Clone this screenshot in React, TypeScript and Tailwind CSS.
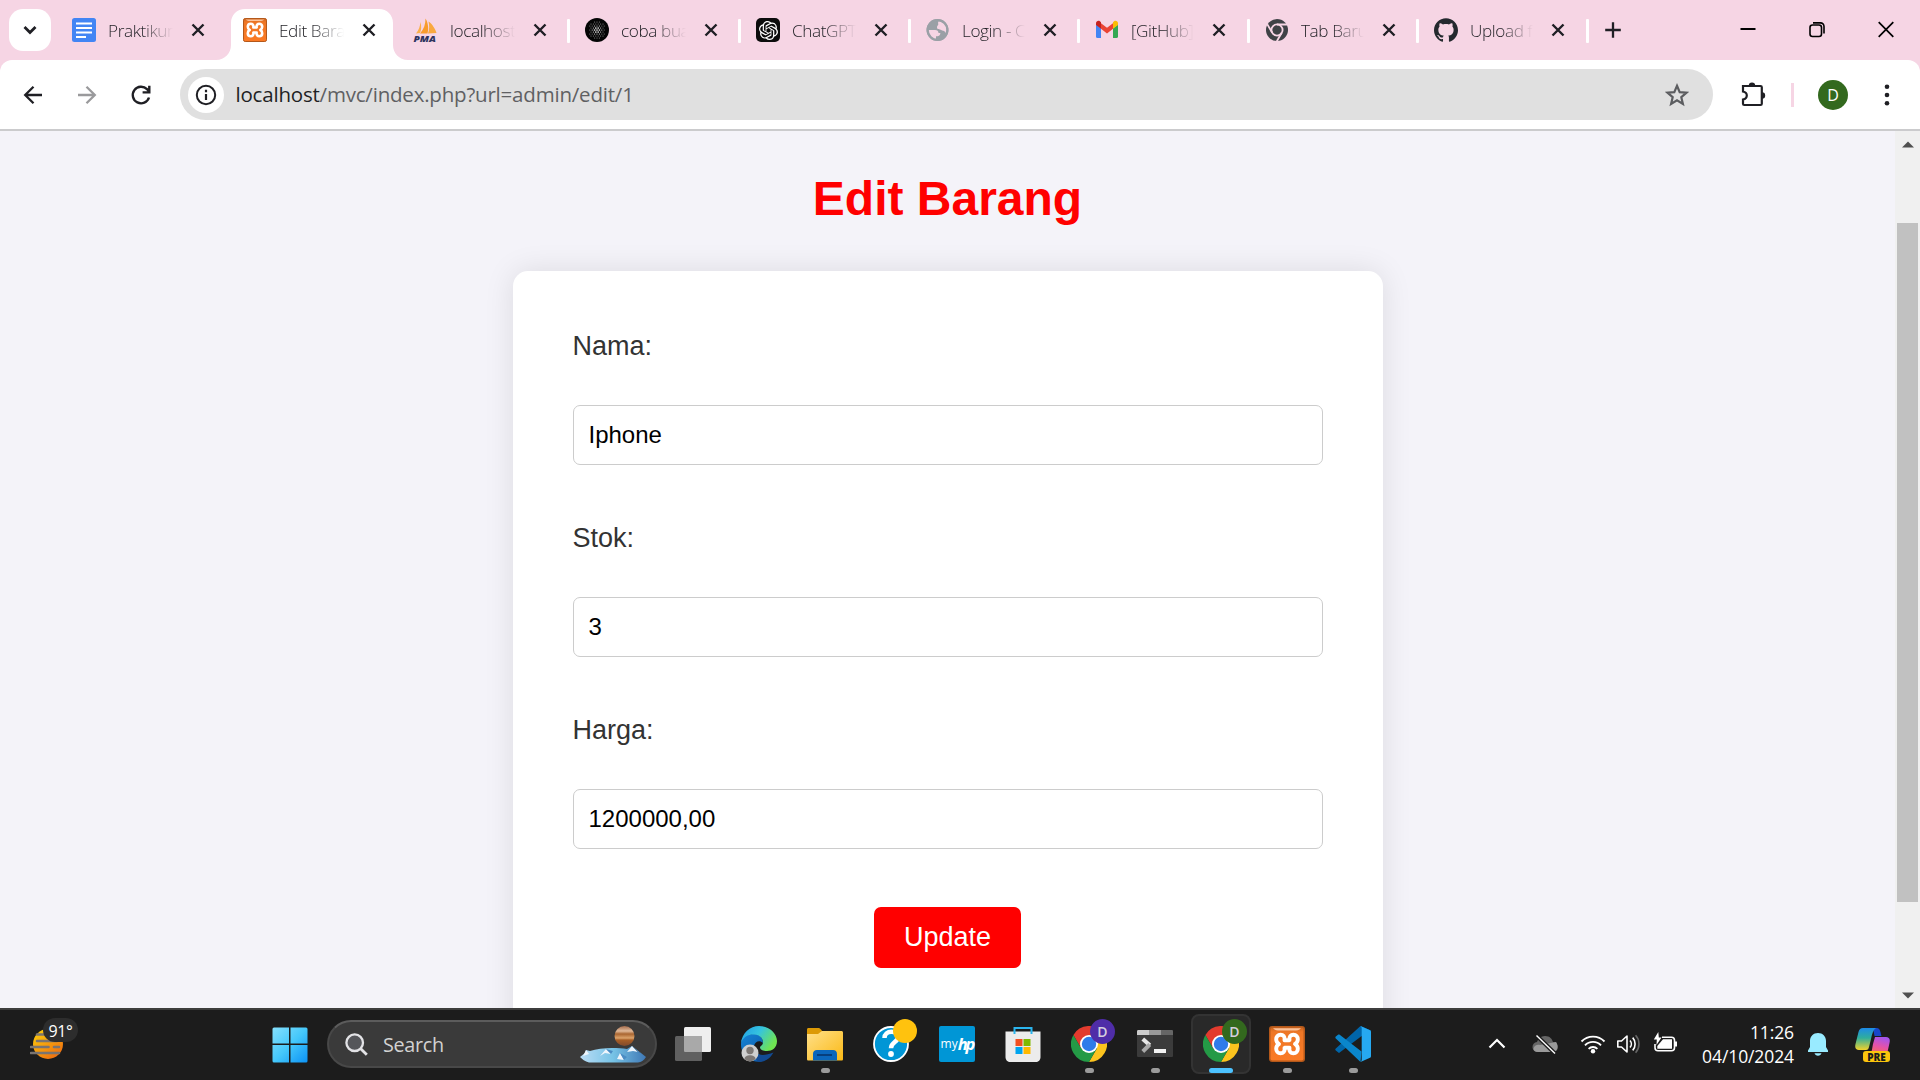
import type { ReactNode } from "react";
import { SiOpenai, SiGithub } from "react-icons/si";

const svgProps = { fill: "none", xmlns: "http://www.w3.org/2000/svg" };

function CloseIcon() {
  return (
    <svg {...svgProps} className="size-6 shrink-0" viewBox="0 0 24 24" stroke="#1f1f24" strokeWidth="2.4">
      <path d="M6.5 6.5l11 11M17.5 6.5l-11 11" />
    </svg>
  );
}

function DocsIcon() {
  return (
    <svg {...svgProps} className="size-6" viewBox="0 0 24 24">
      <rect width="24" height="24" rx="2.5" fill="#4285f4" />
      <path d="M4 5.5h16M4 10h16M4 14.5h16M4 19h10" stroke="#fff" strokeWidth="2.2" />
    </svg>
  );
}

function XamppIcon({ className }: { className: string }) {
  return (
    <svg {...svgProps} className={className} viewBox="0 0 36 36">
      <defs>
        <linearGradient id="xo" x1="0" y1="0" x2="0" y2="1">
          <stop offset="0" stopColor="#c8621d" />
          <stop offset=".15" stopColor="#ee7726" />
          <stop offset="1" stopColor="#fb7a24" />
        </linearGradient>
      </defs>
      <rect x=".75" y=".75" width="34.5" height="34.5" rx="2.5" fill="url(#xo)" stroke="#b4581a" strokeWidth="1.5" />
      <path d="M4 2.200h28c-2 2-4 2.400-7 2.400H11C8 4.600 6 4.200 4 2.200z" fill="#fbc49c" />
      <path
        d="M15.500 14.200C16.200 10.500 14 8.700 11.600 8.700 8.800 8.700 7.200 10.700 7.200 13.200c0 2.300 1 3.800 2.800 4.800C8.200 19 7.200 20.500 7.200 22.800c0 2.500 1.600 4.500 4.400 4.500 2.400 0 4.600-1.800 3.900-5.500h5C19.800 25.500 22 27.300 24.400 27.300c2.800 0 4.400-2 4.400-4.500 0-2.300-1-3.800-2.800-4.800 1.800-1 2.800-2.500 2.800-4.800 0-2.500-1.600-4.500-4.400-4.500-2.400 0-4.600 1.800-3.900 5.500z"
        stroke="#fff"
        strokeWidth="3.900"
        strokeLinejoin="round"
      />
    </svg>
  );
}

function PmaIcon() {
  return (
    <svg {...svgProps} className="h-6 w-[24px] overflow-visible" viewBox="0 0 24 24">
      <path d="M2 15.500C5 12 6 8 6.500 4c1 4 1 8-.5 11z" fill="#fbb04a" />
      <path d="M6 15.500C10 11 11.500 6 11.500.5c2.500 4 3.500 10 2 15z" fill="#f89c2c" />
      <path d="M14 15.500c1.500-4 1.500-8 .5-12 4 2.500 7 8 8 11.500z" fill="#f9a83f" />
      <text x="-.5" y="23.500" fontFamily="Open Sans, sans-serif" fontSize="9.500" fontWeight="800" fontStyle="italic" fill="#2d335e" textLength="22.500" lengthAdjust="spacingAndGlyphs">PMA</text>
    </svg>
  );
}

function DotSphereIcon() {
  const dots = [-4, -3, -2, -1, 0, 1, 2, 3, 4];
  return (
    <svg {...svgProps} className="size-6" viewBox="-12 -12 24 24">
      <circle r="12" fill="#050505" />
      {dots.flatMap((row) =>
        dots.map((col) => {
          const x = (col + (row % 2 ? 0.5 : 0)) * 2.4;
          const y = row * 2;
          const d = Math.hypot(x, y);
          return d < 8.6 ? <circle key={`${col},${row}`} cx={x} cy={y} r={d < 4 ? 0.85 : 0.6} fill={d < 5 ? "#e8e8e8" : "#8b8b8b"} /> : null;
        }),
      )}
    </svg>
  );
}

function ChatGptIcon() {
  return (
    <span className="flex size-6 items-center justify-center rounded-[5px] bg-[#0c0c0c]">
      <SiOpenai className="size-[19px] text-white" />
    </span>
  );
}

function GlobeIcon() {
  return (
    <svg {...svgProps} className="size-6" viewBox="0 0 24 24">
      <circle cx="11.500" cy="12" r="11" fill="#9aa0a6" />
      <path d="M2.500 12H9c2.300 0 3.500 1.300 3.500 3h1.800c0 2.800-2 3.300-4.300 3.300v3C6 20.800 2.500 17 2.500 12z" fill="#f6d5e4" />
      <path d="M12.800 3.100c4.500.5 8 4.500 8 8.900 0 1.300-.3 2.500-.8 3.600-.8-2.300-2-3.100-4-3.100-1.500-1.500-4.500-.5-5-2.700-.4-1.700 1.300-2.300 1.300-3.500-.3-1.300-.3-2.300.5-3.200z" fill="#f6d5e4" />
      <circle cx="11.500" cy="12" r="9.800" stroke="#9aa0a6" strokeWidth="2.200" />
    </svg>
  );
}

function GmailIcon() {
  return (
    <svg {...svgProps} className="size-6" viewBox="0 0 24 24">
      <path d="M1 6.500l5 3.700V20H2.600A1.600 1.600 0 0 1 1 18.400z" fill="#4285f4" />
      <path d="M23 6.500l-5 3.700V20h3.400a1.600 1.600 0 0 0 1.600-1.600z" fill="#34a853" />
      <path d="M6 5.200l6 4.500 6-4.500v5.600l-6 4.600-6-4.600z" fill="#ea4335" />
      <path d="M1 7V5.300c0-2 2.300-3.100 3.900-2L6 4.300v6.500z" fill="#c5221f" />
      <path d="M23 7V5.300c0-2-2.300-3.100-3.900-2L18 4.300v6.500z" fill="#fbbc04" />
    </svg>
  );
}

function ChromeMono() {
  return (
    <svg {...svgProps} className="size-6" viewBox="-12 -12 24 24">
      <circle r="11" fill="#3f4246" />
      <circle r="5.600" stroke="#f6d5e4" strokeWidth="1.800" />
      <path d="M0-5.500H10M4.760 2.750L-.2 11.300M-4.760 2.750L-9.800-5.900" stroke="#f6d5e4" strokeWidth="1.800" />
    </svg>
  );
}

function ChromeColor() {
  return (
    <svg {...svgProps} className="size-9" viewBox="-18 -18 36 36">
      <path d="M-15.600-9A18 18 0 0 1 15.600-9L0-9-7.800 4.500z" fill="#e33b2e" />
      <path d="M15.600-9A18 18 0 0 1 0 18L7.800 4.500 0-9z" fill="#fcc31e" />
      <path d="M0 18A18 18 0 0 1-15.600-9L-7.800 4.500 7.800 4.500z" fill="#249a46" />
      <circle r="9" fill="#fff" />
      <circle r="7.200" fill="#2f7bea" />
    </svg>
  );
}

type TabData = { title: string; icon: ReactNode; width: string; titleWidth: string; active?: boolean; divider?: boolean };

const tabs: TabData[] = [
  { title: "Praktikum", icon: <DocsIcon />, width: "w-[171px]", titleWidth: "w-[65px]" },
  { title: "Edit Barang", icon: <XamppIcon className="size-6" />, width: "w-[171px]", titleWidth: "w-[65px]", active: true },
  { title: "localhost", icon: <PmaIcon />, width: "w-[171px]", titleWidth: "w-[65px]", divider: true },
  { title: "coba buat", icon: <DotSphereIcon />, width: "w-[171px]", titleWidth: "w-[65px]", divider: true },
  { title: "ChatGPT", icon: <ChatGptIcon />, width: "w-[170px]", titleWidth: "w-[64px]", divider: true },
  { title: "Login - C", icon: <GlobeIcon />, width: "w-[169px]", titleWidth: "w-[63px]", divider: true },
  { title: "[GitHub]", icon: <GmailIcon />, width: "w-[170px]", titleWidth: "w-[63px]", divider: true },
  { title: "Tab Baru", icon: <ChromeMono />, width: "w-[169px]", titleWidth: "w-[63px]", divider: true },
  { title: "Upload f", icon: <SiGithub className="size-6 text-[#24292e]" />, width: "w-[170px]", titleWidth: "w-[63px]", divider: true },
];

function Tab({ title, icon, width, titleWidth, active, divider }: TabData) {
  return (
    <div className={`relative flex h-[51px] shrink-0 items-center pb-[9px] pl-[15px] ${width}`}>
      {active && (
        <svg {...svgProps} className="absolute top-0 -left-3 h-[51px] w-[192px]" viewBox="0 0 192 51">
          <path d="M0 51c9 0 15-7 15-15V14C15 6 21 0 29 0H163c8 0 14 6 14 14V36c0 8 6 15 15 15z" fill="#fff" />
        </svg>
      )}
      <span className="relative flex size-6 shrink-0">{icon}</span>
      <span className={`relative ml-3 shrink-0 overflow-hidden pt-0.5 font-['Open_Sans'] text-[17.200px] leading-6 font-[350] tracking-[-0.4px] whitespace-nowrap text-[#1f1f24] [mask-image:linear-gradient(to_right,black_50%,transparent)] ${titleWidth}`}>
        {title}
      </span>
      <span className="relative ml-[13px] flex">
        <CloseIcon />
      </span>
      {divider && <span className="mt-px ml-auto h-6 w-[3px] rounded-[1px] bg-white" />}
    </div>
  );
}

function TabStrip() {
  return (
    <div className="flex h-[60px] items-start bg-[#f6d5e4] pt-[9px]">
      <button className="mr-1.5 ml-[9px] flex size-[42px] shrink-0 items-center justify-center rounded-[14px] bg-white">
        <svg {...svgProps} className="size-6" viewBox="0 0 24 24" stroke="#1f1f24" strokeWidth="2.800">
          <path d="M6.500 9l5.500 5.500L17.500 9" />
        </svg>
      </button>
      {tabs.map((t) => (
        <Tab key={t.title} {...t} />
      ))}
      <svg {...svgProps} className="mt-[9px] ml-3 size-6" viewBox="0 0 24 24" stroke="#1f1f24" strokeWidth="2.300">
        <path d="M12 4.200v15.600M4.200 12h15.600" />
      </svg>
      <div className="mt-2 mr-[26px] ml-auto flex items-center gap-[53px]">
        <svg {...svgProps} className="h-6 w-4" viewBox="0 0 16 24" stroke="#000" strokeWidth="2">
          <path d="M.5 12h15" />
        </svg>
        <svg {...svgProps} className="h-6 w-4" viewBox="0 0 16 24" stroke="#000" strokeWidth="1.600">
          <rect x="1" y="8" width="11.500" height="11.500" rx="2.500" />
          <path d="M4 5.900h7.500a3.500 3.500 0 0 1 3.500 3.500v7" />
        </svg>
        <svg {...svgProps} className="h-6 w-4" viewBox="0 0 16 24" stroke="#000" strokeWidth="1.700">
          <path d="M.7 5.200l14.600 14.600M15.300 5.200L.7 19.800" />
        </svg>
      </div>
    </div>
  );
}

function Toolbar() {
  return (
    <div className="bg-[#f6d5e4]">
      <div className="flex h-[71px] items-center rounded-t-xl border-b-2 border-[#cbcbcd] bg-white">
        <svg {...svgProps} className="ml-[21px] size-6" viewBox="0 0 24 24" stroke="#1f1f24" strokeWidth="2.300">
          <path d="M21 12H4.500M12.500 3.700L4.200 12l8.300 8.300" />
        </svg>
        <svg {...svgProps} className="ml-[30px] size-6" viewBox="0 0 24 24" stroke="#9a9a9c" strokeWidth="2.300">
          <path d="M3 12h16.500M11.500 3.700l8.300 8.300-8.300 8.300" />
        </svg>
        <svg {...svgProps} className="ml-[30px] size-6" viewBox="0 0 24 24" stroke="#1f1f24" strokeWidth="2.400">
          <path d="M20 14.500A8.300 8.300 0 1 1 18 6.200l2 2M20.300 2.800v6.600h-6.700" />
        </svg>
        <div className="ml-[27px] flex h-[51px] w-[1533px] items-center rounded-full bg-[#e0e0e0] pr-6 pl-[7.500px]">
          <span className="flex size-9 items-center justify-center rounded-full bg-white">
            <svg {...svgProps} className="size-6" viewBox="0 0 24 24" stroke="#1f1f24" strokeWidth="2">
              <circle cx="12" cy="12" r="9.200" />
              <path d="M12 11v6M12 6.800v2.400" strokeWidth="2.200" />
            </svg>
          </span>
          <span className="mb-0.5 ml-3 font-['Open_Sans'] text-[20.500px] leading-7 tracking-[-0.200px] text-[#5f6063]">
            <span className="text-[#1f1f24]">localhost</span>/mvc/index.php?url=admin/edit/1
          </span>
          <svg {...svgProps} className="ml-auto size-6" viewBox="0 0 24 24" stroke="#5c5d60" strokeWidth="2.200">
            <path d="M12 2.800l2.700 6.300 6.800.6-5.200 4.500 1.600 6.700-5.900-3.600-5.900 3.600 1.600-6.700-5.200-4.500 6.800-.6z" />
          </svg>
        </div>
        <svg {...svgProps} className="mb-px ml-[26px] size-[27px]" viewBox="0 0 27 27">
          <path d="M4 5h17.500c.8 0 1.300.5 1.300 1.300v16.400c0 .8-.5 1.300-1.300 1.300H5.300C4.500 24 4 23.500 4 22.700v-4.200c2.500-.5 3.800-2 3.800-4s-1.300-3.500-3.800-4V5z" stroke="#1f1f24" strokeWidth="2.200" />
          <path d="M9.800 4.600a3.200 3.200 0 0 1 6.400 0zM23 11.300a3.200 3.200 0 0 1 0 6.400z" fill="#1f1f24" />
        </svg>
        <span className="ml-[25px] h-6 w-[3px] bg-[#f6d5e4]" />
        <span className="ml-6 flex size-[30px] items-center justify-center rounded-full bg-[#33691e] font-['Open_Sans'] text-base leading-none text-white">D</span>
        <svg {...svgProps} className="ml-[27px] size-6" viewBox="0 0 24 24" fill="#1f1f24">
          <circle cx="12" cy="3.700" r="2.300" />
          <circle cx="12" cy="12" r="2.300" />
          <circle cx="12" cy="20.300" r="2.300" />
        </svg>
      </div>
    </div>
  );
}

function Field({ label, value }: { label: string; value: string }) {
  return (
    <label className="mb-[55px] block text-[27px] leading-9 text-[#333]">
      <span className="block">{label}</span>
      <input readOnly value={value} className="mt-[41px] block h-[60px] w-full rounded-[7px] border border-[#ccc] bg-white px-[15px] text-2xl text-black outline-none" />
    </label>
  );
}

function Scrollbar() {
  return (
    <div className="flex w-[25px] shrink-0 flex-col items-center bg-[#f0f0f0]">
      <svg {...svgProps} className="mt-[10px] h-[7px] w-3" viewBox="0 0 12 7" fill="#505050">
        <path d="M0 6.500h12L6 .5z" />
      </svg>
      <div className="mt-[75px] h-[679px] w-[21px] bg-[#c1c1c1]" />
      <svg {...svgProps} className="mt-auto mb-[9px] h-[7px] w-3" viewBox="0 0 12 7" fill="#505050">
        <path d="M0 .5h12L6 6.500z" />
      </svg>
    </div>
  );
}

function Page() {
  return (
    <div className="flex h-[877px] bg-[#f4f3f9] font-['Liberation_Sans',Arial,sans-serif]">
      <main className="flex flex-1 flex-col items-center overflow-hidden">
        <h1 className="mt-10 text-[48px] leading-[56px] font-bold text-[#f00]">Edit Barang</h1>
        <form className="mt-[44px] h-[800px] w-[870px] shrink-0 rounded-[15px] bg-white px-[60px] pt-[57px] shadow-[0_0_30px_rgba(0,0,0,0.1)]">
          <Field label="Nama:" value="Iphone" />
          <Field label="Stok:" value="3" />
          <Field label="Harga:" value="1200000,00" />
          <button type="button" className="mx-auto mt-[58px] block h-[61px] w-[147px] rounded-[7px] bg-[#f00] pb-px text-[27px] text-white">
            Update
          </button>
        </form>
      </main>
      <Scrollbar />
    </div>
  );
}

function TaskSlot({ children, state }: { children: ReactNode; state?: "open" | "active" }) {
  return (
    <div className="flex w-[66px] shrink-0 justify-center">
      <div className={`relative flex size-[60px] items-center justify-center rounded-lg ${state === "active" ? "border-2 border-[#333] bg-[#292929]" : ""}`}>
        {children}
        {state === "open" && <span className="absolute bottom-px h-[5px] w-[9px] rounded-full bg-[#9b9b9b]" />}
        {state === "active" && <span className="absolute -bottom-px h-[5px] w-6 rounded-full bg-[#4cc2ff]" />}
      </div>
    </div>
  );
}

function ProfileChrome({ tone }: { tone: string }) {
  return (
    <div className="relative size-9">
      <ChromeColor />
      <span className={`absolute -top-[7px] left-[19px] flex size-[25px] items-center justify-center rounded-full font-['Open_Sans'] text-[14px] leading-none font-semibold text-[#d5cfdf] ${tone}`}>D</span>
    </div>
  );
}

function EdgeIcon() {
  return (
    <svg {...svgProps} className="size-9" viewBox="0 0 36 36">
      <defs>
        <linearGradient id="eg" x1="0" y1="0" x2="1" y2=".5">
          <stop offset="0" stopColor="#1f9be6" />
          <stop offset=".5" stopColor="#35c3df" />
          <stop offset="1" stopColor="#6fe552" />
        </linearGradient>
        <linearGradient id="eb" x1="0" y1="0" x2="1" y2="1">
          <stop offset="0" stopColor="#1484d6" />
          <stop offset="1" stopColor="#0c50a0" />
        </linearGradient>
      </defs>
      <path d="M0 18C0 11 6 8 12 8c7 0 10 4 10 9-3-3-8-2-9 3-1 7 6 12 18 8-6 9-17 10-24 4C2 28 0 24 0 18z" fill="url(#eb)" />
      <path d="M12 23c1 6 10 8 20.500 3.500C29 33 23 36 18 36c-4-3-7-8-6-13z" fill="#124a92" />
      <path d="M0 17C1 7 9 0 18 0c11 0 18 8 18 15 0 7-5 10-10 10-4 0-7-1.500-7-3.500 0-1.500 3-2 3-5.500 0-4-4-7.500-9.500-7.500C7 8.500 2 11 0 17z" fill="url(#eg)" />
      <circle cx="9" cy="27" r="8.500" fill="#cfcfcf" />
      <circle cx="9" cy="24.500" r="3.700" fill="#7c7774" />
      <path d="M3.500 33c0-5 11-5 11 0-3 3-8 3-11 0z" fill="#7c7774" />
    </svg>
  );
}

function FolderIcon() {
  return (
    <svg {...svgProps} className="size-9" viewBox="0 0 36 36">
      <defs>
        <linearGradient id="fo" x1="0" y1="0" x2="1" y2="1">
          <stop offset="0" stopColor="#ffe08a" />
          <stop offset="1" stopColor="#fbb915" />
        </linearGradient>
      </defs>
      <path d="M0 3.500C0 2.500.7 2 1.500 2H11c1.200 0 2 .4 2.700 1.200L16 6v4H0z" fill="#dc9a06" />
      <path d="M0 8h11l4-3h19.500c.8 0 1.500.7 1.500 1.500V33c0 1-.5 1.500-1.500 1.500h-33C.5 34.500 0 34 0 33z" fill="url(#fo)" />
      <path d="M6 34.500V28c0-2.500 1.500-4 4-4h16c2.500 0 4 1.500 4 4v6.500z" fill="#0b67bc" />
      <path d="M10 29h15" stroke="#073f7d" strokeWidth="2" />
    </svg>
  );
}

function HelpIcon() {
  return (
    <div className="relative size-9">
      <svg {...svgProps} className="size-9" viewBox="0 0 36 36">
        <circle cx="18" cy="18" r="17" fill="#0096d6" stroke="#fff" strokeWidth="1.800" />
        <path d="M11.500 12c0-4 3-6.300 7-6.300s6.500 2.200 6.500 5.500c0 4.800-7 5-7 11" stroke="#fff" strokeWidth="4.500" />
        <circle cx="18" cy="28" r="2.900" fill="#fff" />
      </svg>
      <span className="absolute -top-[7px] left-5 size-6 rounded-full bg-[#ffc20e]" />
    </div>
  );
}

function MyHpIcon() {
  return (
    <span className="flex size-9 items-center justify-center rounded-[2px] bg-[#0096d6] font-['Open_Sans'] text-white">
      <span className="text-[12px] leading-none">my</span>
      <span className="text-[16.500px] leading-none font-bold tracking-[-2px] italic">hp</span>
    </span>
  );
}

function StoreIcon() {
  return (
    <svg {...svgProps} className="size-9" viewBox="0 0 36 36">
      <path d="M.5 5.500h35V31c0 3-2 5-5 5h-25c-3 0-5-2-5-5z" fill="#ececec" />
      <path d="M9.500 8V2h17v6" stroke="#2bb5ee" strokeWidth="2" />
      <path d="M10.500 13h7v7h-7z" fill="#f25022" />
      <path d="M18.500 13h7v7h-7z" fill="#7fba00" />
      <path d="M10.500 21h7v7h-7z" fill="#00a4ef" />
      <path d="M18.500 21h7v7h-7z" fill="#ffb900" />
    </svg>
  );
}

function TerminalIcon() {
  return (
    <svg {...svgProps} className="size-9" viewBox="0 0 36 36">
      <path d="M0 5.500C0 4.500.5 4 1.500 4h33c1 0 1.500.5 1.500 1.500v24c0 1-.5 1.500-1.500 1.500h-33C.5 31 0 30.500 0 29.500z" fill="#3b3b3b" />
      <path d="M0 9V5.500C0 4.500.5 4 1.500 4H12v5z" fill="#cccccc" />
      <path d="M12 4h12v5H12z" fill="#999" />
      <path d="M24 4h10.500c1 0 1.500.5 1.500 1.500V9H24z" fill="#666" />
      <path d="M5.800 13l7 6.300" stroke="#e6e6e6" strokeWidth="4" />
      <path d="M12.800 18.500l-7 7" stroke="#a9a9a9" strokeWidth="4" />
      <path d="M17 23h12v4H17z" fill="#f2f2f2" />
    </svg>
  );
}

function VsCodeIcon() {
  return (
    <svg {...svgProps} className="size-9" viewBox="0 0 36 36">
      <path d="M25.500 0L36 4.500 26 10.500 4 27 .8 24.500c-.7-.7-.7-1.400 0-2z" fill="#0065a9" />
      <path d="M25.500 36L.8 12.500c-.6-.7-.6-1.400 0-2L3 8.700c.5-.4 1.200-.4 1.700 0L26.500 25.500z" fill="#0a86cc" />
      <path d="M25.500 0L35 4.200c.7.300 1 .8 1 1.500v24.600c0 .7-.3 1.200-1 1.500L25.500 36c.8-.7 1.200-1.400 1.200-2.300V2.300C26.700 1.400 26.300.7 25.500 0z" fill="#26a9f1" />
    </svg>
  );
}

function TaskViewIcon() {
  return (
    <svg {...svgProps} className="size-9" viewBox="0 0 36 36">
      <rect x="9" y="1" width="27" height="25" rx="1.500" fill="#efefef" />
      <rect x="0" y="10" width="27" height="25" rx="1.500" fill="#606060" />
      <path d="M9 10h18v16H10.500c-1 0-1.500-.5-1.500-1.500z" fill="#a9a9a9" />
    </svg>
  );
}

function Weather() {
  return (
    <div className="relative ml-[30px] h-[60px] w-[50px]">
      <svg {...svgProps} className="absolute top-[14px] left-0 h-[32px] w-[34px]" viewBox="0 0 34 32">
        <defs>
          <linearGradient id="su" x1=".1" y1="0" x2=".8" y2="1">
            <stop offset="0" stopColor="#fcd00a" />
            <stop offset="1" stopColor="#ee6a10" />
          </linearGradient>
        </defs>
        <circle cx="18" cy="16" r="15" fill="url(#su)" />
        <path d="M7 6.500h8M7 13h20M1 19h17.500M24 19h5M1 25h28" stroke="#7a7470" strokeWidth="2.600" strokeLinecap="round" />
      </svg>
      <span className="absolute top-[4px] left-[13px] flex h-6 w-[35px] items-center justify-center rounded-full bg-[#2d2d2d] pt-px font-['Open_Sans'] text-[16px] leading-none tracking-[-0.3px] text-white">91°</span>
    </div>
  );
}

function SearchBox() {
  return (
    <div className="ml-[20px] flex h-12 w-[330px] items-center rounded-full border-2 border-[#484848] border-t-[#5c5c5c] bg-[#3a3a3a] pr-[9px] pl-4">
      <svg {...svgProps} className="size-[23px]" viewBox="0 0 23 23" stroke="#e3e3e6" strokeWidth="2.300">
        <circle cx="9.700" cy="9.700" r="8.300" fill="#55565a" />
        <path d="M15.500 15.500l6.300 6.300" strokeWidth="2.800" />
      </svg>
      <span className="ml-[15px] pt-px font-['Open_Sans'] text-[19.800px] leading-6 tracking-[-0.3px] text-[#d2d2d2]">Search</span>
      <svg {...svgProps} className="ml-auto h-[38px] w-[66px]" viewBox="0 0 66 38">
        <defs>
          <linearGradient id="pl" x1="0" y1="0" x2="0" y2="1">
            <stop offset="0" stopColor="#a56c4c" />
            <stop offset=".25" stopColor="#e0b999" />
            <stop offset=".4" stopColor="#a96530" />
            <stop offset=".6" stopColor="#dba36b" />
            <stop offset=".7" stopColor="#a75e26" />
            <stop offset="1" stopColor="#7f4a2d" />
          </linearGradient>
          <linearGradient id="ic" x1="0" y1="0" x2="1" y2="0">
            <stop offset="0" stopColor="#b9dcf5" />
            <stop offset=".5" stopColor="#77c3e6" />
            <stop offset="1" stopColor="#3f78b5" />
          </linearGradient>
        </defs>
        <path d="M0 32l5-4 1-3 4 1c6-2 14-3 22-3 6 0 11 0 15 1l5-3 4 5 5 2 5 4c-2 3-5 5.500-8 5.500H9c-4-1-7-3.500-9-5.500z" fill="url(#ic)" />
        <path d="M6 25l3 4-6 2zM26 24l5 5-6-1-5 3zM52 21l6 6-5-1-6 1zM40 28l4 7-7-1z" fill="#eef5fc" />
        <path d="M26 24l5 5 2-3zM52 21l6 6 3 1zM40 28l4 7 3-3z" fill="#4b8cc4" />
        <circle cx="44.500" cy="11" r="10" fill="url(#pl)" />
      </svg>
    </div>
  );
}

function Tray() {
  return (
    <div className="ml-auto flex h-[60px] items-center">
      <svg {...svgProps} className="h-6 w-[18px]" viewBox="0 0 18 24" stroke="#fff" strokeWidth="2.200">
        <path d="M1.500 15.500L9 8l7.500 7.500" />
      </svg>
      <svg {...svgProps} className="ml-[26px] h-6 w-[26px]" viewBox="0 0 26 24">
        <path d="M6 20a5 5 0 0 1-1-10c1-3 4-6 8-6 5 0 7 3 8 6a5 5 0 0 1 0 10z" fill="#666" />
        <path d="M1.500 16.500C2 13 6 12 8 13l16-3c2 2 2.500 10-3 10H6c-3 0-4.500-1.500-4.500-3.500z" fill="#9a9a9a" />
        <path d="M4.500 3.500L23 21.500" stroke="#1c1c1c" strokeWidth="4" />
        <path d="M4.500 3.500L23 21.500" stroke="#fff" strokeWidth="1.400" />
      </svg>
      <svg {...svgProps} className="ml-[22px] size-[26px]" viewBox="0 0 26 26" stroke="#fff" strokeWidth="1.900">
        <path d="M1.500 10.500a16 16 0 0 1 23 0M5 14.300a11 11 0 0 1 16 0M8.600 17.800a6.200 6.200 0 0 1 8.800 0" />
        <circle cx="13" cy="20.300" r="2.200" fill="#fff" stroke="none" />
      </svg>
      <svg {...svgProps} className="ml-2.5 size-[26px]" viewBox="0 0 26 26" stroke="#fff" strokeWidth="1.600">
        <path d="M1.800 10h3.700l5.500-5v16l-5.500-5H1.800z" strokeLinejoin="round" />
        <path d="M14 9.500c1.800 2 1.800 5 0 7M16.700 6.600c3.200 3.500 3.200 9.300 0 12.800" />
        <path d="M19.600 4.300c4.500 5 4.500 12.400 0 17.400" stroke="#666" />
      </svg>
      <svg {...svgProps} className="ml-[10px] h-[26px] w-[27px]" viewBox="0 0 27 26">
        <path d="M10 6.200h9.500a3 3 0 0 1 3 3v7.600a3 3 0 0 1-3 3H6a3 3 0 0 1-3-3V13" stroke="#fff" strokeWidth="1.600" />
        <path d="M11 8.300h9v9.400H5.300V15z" fill="#fff" />
        <path d="M23 10.500h2v5h-2z" fill="#fff" />
        <path d="M6.300 1L1.800 8.500h3L4.500 14l5-7.500H6.800z" fill="#fff" />
      </svg>
      <div className="ml-[7px] w-[108px] text-right font-['Open_Sans'] text-[17.500px] leading-6 tracking-[-0.1px] whitespace-nowrap text-white">
        <div>11:26</div>
        <div>04/10/2024</div>
      </div>
      <svg {...svgProps} className="ml-3.5 h-[26px] w-5" viewBox="0 0 20 26" fill="#99ebff">
        <path d="M10 2c4.700 0 8 3.300 8 8v6l2 3.500V21H0v-1.500L2 16v-6c0-4.700 3.300-8 8-8zM6.500 22.300h7c-.5 1.500-1.700 2.400-3.500 2.400s-3-.9-3.500-2.400z" />
      </svg>
      <div className="relative mr-[30px] ml-[27px] h-[36px] w-[35px]">
        <svg {...svgProps} className="h-[36px] w-[35px]" viewBox="0 0 35 36">
          <defs>
            <linearGradient id="ca" x1="0" y1="0" x2="0" y2="1">
              <stop offset="0" stopColor="#1d8ae8" />
              <stop offset=".45" stopColor="#2fae9c" />
              <stop offset="1" stopColor="#f2d22b" />
            </linearGradient>
            <linearGradient id="cb" x1=".6" y1="0" x2=".3" y2="1">
              <stop offset="0" stopColor="#a455ee" />
              <stop offset=".5" stopColor="#e552a8" />
              <stop offset="1" stopColor="#f8714c" />
            </linearGradient>
          </defs>
          <path d="M18 2h4c3 0 3.500 4 4.500 8h-7z" fill="#1746c9" />
          <path d="M8 2h13c-3 2-4 6-5 11l-2 8c-.5 2-1 3-3 3H4c-3 0-4.500-2-3.500-6l3-12C4.300 3.500 5.500 2 8 2z" fill="url(#ca)" />
          <path d="M20 11h11c3 0 4.500 2 3.500 6l-2 9c-.5 2-1.500 3-4 3H14c3-2 3-6 4-11z" fill="url(#cb)" />
        </svg>
        <span className="absolute right-0 bottom-0 flex h-[11px] w-[27px] items-center justify-center rounded-[3px] bg-[#fcc50d] font-['Open_Sans'] text-[10px] leading-none font-extrabold text-[#1c1c1c]">PRE</span>
      </div>
    </div>
  );
}

function Taskbar() {
  return (
    <div className="flex h-[72px] items-start border-t-2 border-[#3d3d3d] bg-[#1c1c1c] pt-1">
      <Weather />
      <svg {...svgProps} className="mt-[13px] ml-[191.500px] size-[36px]" viewBox="0 0 36 36">
        <defs>
          <linearGradient id="wi" gradientUnits="userSpaceOnUse" x1="0" y1="0" x2="36" y2="36">
            <stop offset="0" stopColor="#87e1fd" />
            <stop offset=".5" stopColor="#45c8fb" />
            <stop offset="1" stopColor="#0a91f5" />
          </linearGradient>
        </defs>
        <path d="M2 .500h15v16H.5V2Q.5.500 2 .500zM18.500.500h15.500q1.500 0 1.500 1.500V16.500h-17zM.5 18H17V35.500H2Q.5 35.500.5 34zM18.500 18h17v16q0 1.500-1.500 1.500H18.500z" fill="url(#wi)" />
      </svg>
      <div className="mt-1.5 -ml-[.5px] flex">
        <SearchBox />
      </div>
      <div className="ml-[3px] flex">
        <TaskSlot><TaskViewIcon /></TaskSlot>
        <TaskSlot><EdgeIcon /></TaskSlot>
        <TaskSlot state="open"><FolderIcon /></TaskSlot>
        <TaskSlot><HelpIcon /></TaskSlot>
        <TaskSlot><MyHpIcon /></TaskSlot>
        <TaskSlot><StoreIcon /></TaskSlot>
        <TaskSlot state="open"><ProfileChrome tone="bg-[#4f2da8]" /></TaskSlot>
        <TaskSlot state="open"><TerminalIcon /></TaskSlot>
        <TaskSlot state="active"><ProfileChrome tone="bg-[#33691e]" /></TaskSlot>
        <TaskSlot state="open"><XamppIcon className="size-9" /></TaskSlot>
        <TaskSlot state="open"><VsCodeIcon /></TaskSlot>
      </div>
      <Tray />
    </div>
  );
}

export default function App() {
  return (
    <div className="h-[1080px] w-[1920px] overflow-hidden bg-[#f4f3f9]">
      <TabStrip />
      <Toolbar />
      <Page />
      <Taskbar />
    </div>
  );
}
